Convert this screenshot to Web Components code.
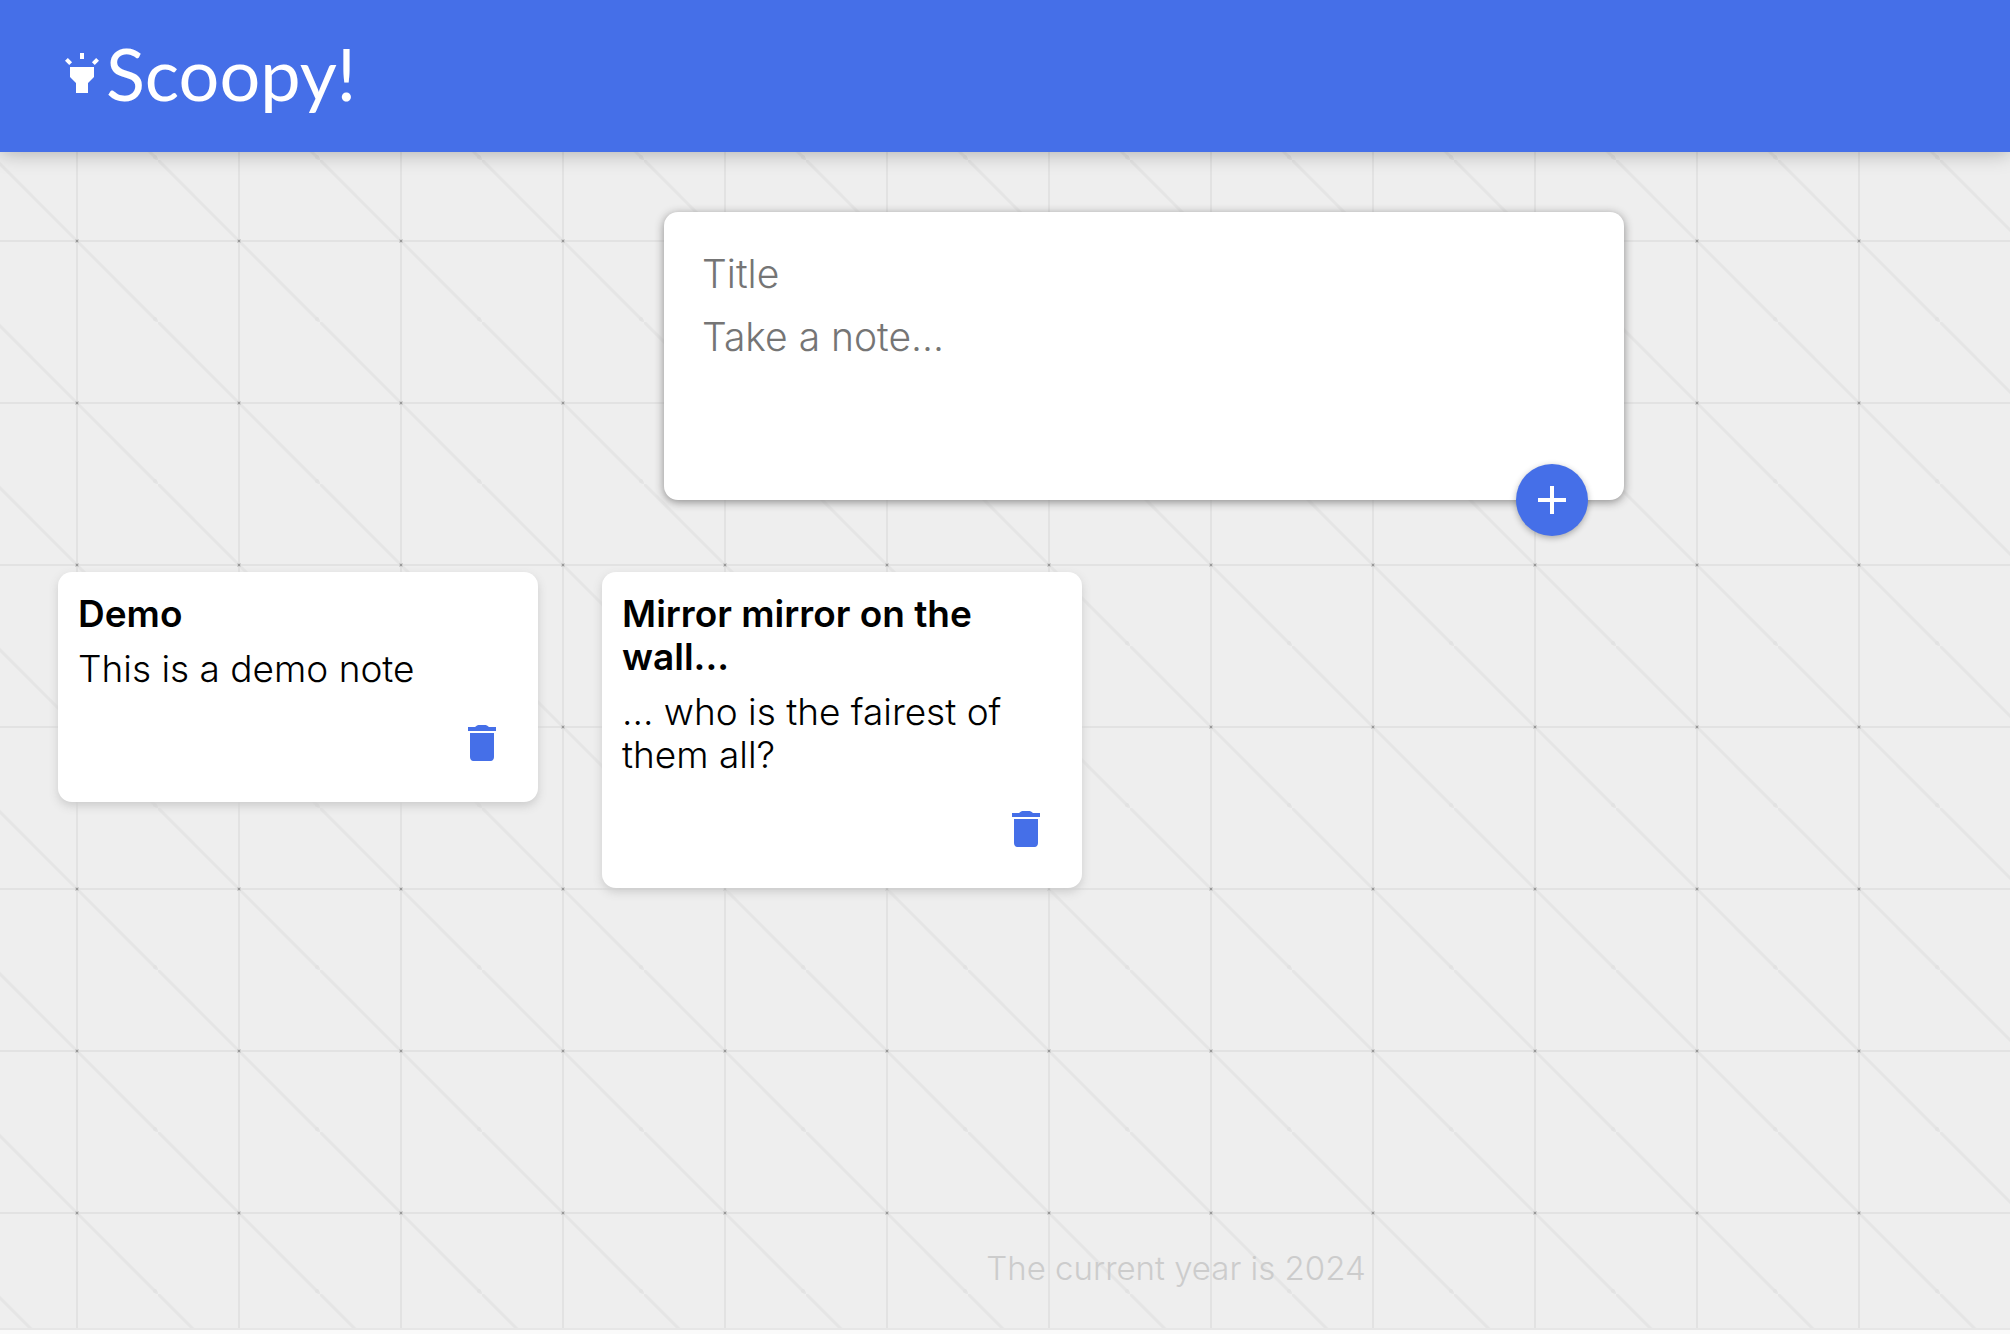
<!DOCTYPE html>
<html lang="en">
<head>
<meta charset="utf-8">
<title>Scoopy!</title>
<style>
html { background: #fafafa; }
body { margin: 0; font-family: Inter, "Noto Sans", sans-serif; font-weight: 300; color: #000; }
</style>
</head>
<body>
<scoopy-app></scoopy-app>
<script>
const define = (name, html) => {
  const template = document.createElement('template');
  template.innerHTML = html;
  customElements.define(name, class extends HTMLElement {
    constructor() {
      super();
      this.attachShadow({ mode: 'open' }).append(template.content.cloneNode(true));
    }
  });
};

define('scoopy-header', `
<style>
:host { display: block; position: relative; background: #456fe8; box-shadow: 0 0 20px rgba(0,0,0,.3); padding: 32px 58px; }
h1 { display: flex; align-items: flex-start; margin: 0; height: 88px; color: #fff; font: 400 72px/82px Lato, sans-serif; }
svg { width: 48px; height: 48px; fill: currentColor; margin-top: 17px; }
</style>
<h1><svg viewBox="0 0 24 24" aria-hidden="true"><path d="m6 14 3 3v5h6v-5l3-3V9H6zm5-12h2v3h-2zM3.5 5.875 4.914 4.46l2.12 2.122L5.62 7.997zm13.46.71 2.123-2.12 1.414 1.414L18.375 8z"/></svg><slot></slot></h1>
`);

define('note-form', `
<style>
:host { display: block; padding: 60px 0 0 278px; }
form { position: relative; display: flex; flex-direction: column; box-sizing: border-box; max-width: 960px; margin: 0 auto; padding: 30px; background: #fff; border-radius: 14px; box-shadow: 0 2px 10px #8a8989; }
input, textarea { display: block; box-sizing: border-box; width: 100%; margin: 0; border: 0; outline: 0; padding: 8px; background: none; resize: none; font: inherit; font-size: 39px; line-height: 47px; }
input { height: 63px; }
textarea { height: 165px; }
::placeholder { color: #757575; opacity: 1; }
button { position: absolute; right: 36px; bottom: -36px; display: grid; place-items: center; width: 72px; height: 72px; border: 0; padding: 0; border-radius: 50%; background: #456fe8; color: #fff; box-shadow: 0 2px 6px rgba(0,0,0,.3); }
svg { width: 48px; height: 48px; fill: currentColor; }
</style>
<form>
<input name="title" placeholder="Title" aria-label="Title">
<textarea name="content" placeholder="Take a note..." aria-label="Note"></textarea>
<button type="button" aria-label="Add note"><svg viewBox="0 0 24 24"><path d="M19 13h-6v6h-2v-6H5v-2h6V5h2v6h6z"/></svg></button>
</form>
`);

define('note-card', `
<style>
:host { display: block; box-sizing: border-box; width: 480px; padding: 20px; background: #fff; border-radius: 14px; box-shadow: 0 4px 10px #ccc; }
h2, p { margin: 0; font-size: 37px; line-height: 43px; }
h2 { font-weight: 600; margin-bottom: 12px; }
p { margin-bottom: 20px; }
button { display: grid; place-items: center; box-sizing: border-box; width: 72px; height: 72px; margin-left: auto; border: 0; padding: 0 0 6px; background: none; color: #456fe8; }
svg { width: 48px; height: 48px; fill: currentColor; }
</style>
<h2><slot name="title"></slot></h2>
<p><slot></slot></p>
<button type="button" aria-label="Delete note"><svg viewBox="0 0 24 24"><path d="M6 19c0 1.1.6 2 1.7 2h8.6c1.1 0 1.7-.9 1.7-2V7H6zM19 4h-3.5l-1-.8Q14.2 3 13.8 3h-3.6Q9.8 3 9.5 3.2l-1 .8H5v2h14z"/></svg></button>
`);

define('scoopy-footer', `
<style>
:host { display: block; padding: 0 0 40px 342px; text-align: center; color: #ccc; font-size: 33px; line-height: 40px; }
p { margin: 0; }
</style>
<footer><p><slot></slot></p></footer>
`);

define('grid-backdrop', `
<style>
:host { display: block; position: absolute; inset: 0; z-index: -1; }
svg { display: block; width: 100%; height: 100%; }
</style>
<svg aria-hidden="true">
<defs><pattern id="tile" x="-4" y="160" width="162" height="162" patternUnits="userSpaceOnUse">
<rect width="162" height="162" fill="#eee"/>
<path d="M-4-4 166 166" stroke="#e5e5e5" stroke-width="3"/>
<path d="M0 81H162M81 0V162" stroke="#e2e2e2" stroke-width="2" fill="none"/>
<circle cx="159" cy="159" r="2" fill="#e2e2e2"/>
<path d="M79 79h4v4h-4z" fill="#d2d2d2"/>
<path d="M80 80h2v2h-2z" fill="#999"/>
</pattern></defs>
<rect width="100%" height="100%" fill="url(#tile)"/>
</svg>
`);

define('scoopy-app', `
<style>
:host { display: flex; flex-direction: column; box-sizing: border-box; position: relative; z-index: 0; min-height: calc(100vh - 4px); border-bottom: 2px solid #e6e6e6; }
.notes { display: flex; flex-wrap: wrap; align-items: flex-start; gap: 64px; padding: 72px 58px; }
scoopy-footer { margin-top: auto; }
</style>
<grid-backdrop></grid-backdrop>
<scoopy-header>Scoopy!</scoopy-header>
<main>
<note-form></note-form>
<section class="notes">
<note-card><span slot="title">Demo</span>This is a demo note</note-card>
<note-card><span slot="title">Mirror mirror on the wall...</span>... who is the fairest of them all?</note-card>
</section>
</main>
<scoopy-footer>The current year is 2024</scoopy-footer>
`);
</script>
</body>
</html>
